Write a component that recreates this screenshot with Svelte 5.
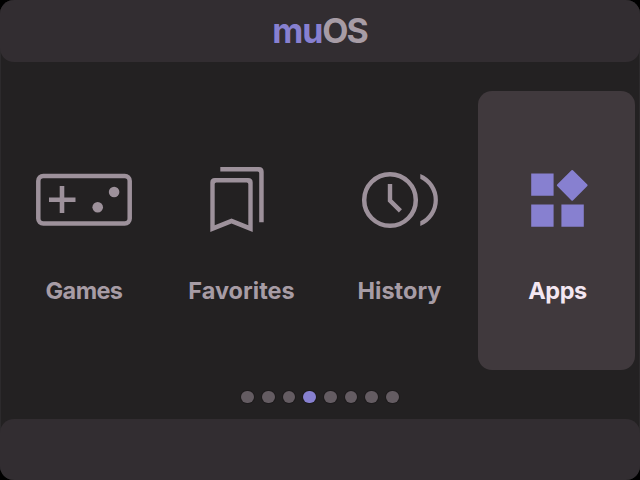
<script>
  const items = [
    { id: 'games', label: 'Games' },
    { id: 'favorites', label: 'Favorites' },
    { id: 'history', label: 'History' },
    { id: 'apps', label: 'Apps' }
  ];
  const selected = 'apps';
  const pages = [0, 1, 2, 3, 4, 5, 6, 7];
</script>

<div class="screen">
  <header><h1><span class="mu">mu</span><span class="os">OS</span></h1></header>
  <main>
    {#each items as item (item.id)}
      <div class="item {item.id}" class:selected={item.id === selected}>
        {#if item.id === 'games'}
          <svg viewBox="36 152 96 96">
            <rect x="38.3" y="176" width="91.4" height="47.5" rx="5" fill="none" stroke="currentColor" stroke-width="4.5" />
            <path d="M49 199.8H75.5M62 186V213" stroke="currentColor" stroke-width="4.6" />
            <circle cx="97.7" cy="207.3" r="5.3" /><circle cx="114.1" cy="192" r="5.3" />
          </svg>
        {:else if item.id === 'favorites'}
          <svg viewBox="194 152 96 96">
            <path fill-rule="evenodd" d="M210.3 232V182.5Q210.3 178 214.8 178H248.2Q252.7 178 252.7 182.5V232L231.5 223.4ZM214.7 225.3L231.5 218.4L248.3 225.3V184Q248.3 182.4 246.7 182.4H216.3Q214.7 182.4 214.7 184Z" />
            <path d="M220.3 167H259Q263.7 167 263.7 171.7V222.3H259.2V173Q259.2 171.4 257.6 171.4H220.3Z" />
          </svg>
        {:else if item.id === 'history'}
          <svg viewBox="352 152 96 96">
            <g fill="none" stroke="currentColor">
              <circle cx="390" cy="200" r="25.8" stroke-width="4.5" />
              <path d="M390 184V200.5L400.4 210.9" stroke-width="4.4" />
            </g>
            <path d="M420.3 174A28 28 0 0 1 420.3 226V221.2A23.5 23.5 0 0 0 420.3 178.8Z" />
          </svg>
        {:else}
          <svg viewBox="510 152 96 96">
            <path d="M531.2 173.4h22.4v22.4h-22.4zM531.2 204.4h22.4v22.4h-22.4zM561.4 204.4h22.4v22.4h-22.4z" />
            <path d="M572.2 171L586.6 185.3L572.2 199.7L557.9 185.3Z" stroke="currentColor" stroke-width="2" stroke-linejoin="round" />
          </svg>
        {/if}
        <span class="label">{item.label}</span>
      </div>
    {/each}
  </main>
  <nav>
    {#each pages as page}<i class:active={page === 3}></i>{/each}
  </nav>
  <footer></footer>
</div>

<style>
  :global(body) { background: #000; }
  .screen {
    width: 640px;
    height: 480px;
    box-sizing: border-box;
    display: flex;
    flex-direction: column;
    overflow: hidden;
    border-radius: 14px;
    background: #232122;
    box-shadow: inset 1px 0 #2c2a2c, inset -1px 0 #2c2a2c;
    font-family: "Inter", sans-serif;
  }
  header, footer { flex: none; background: #322d31; border-radius: 14px; }
  header { height: 62px; display: flex; justify-content: center; }
  footer { height: 61px; }
  h1 { margin: 0; padding-right: 1px; font-size: 34px; line-height: 61px; font-weight: 650; color: #a79ca5; }
  .mu { color: #8780d0; letter-spacing: -1px; }
  .os { letter-spacing: -2px; }
  main {
    height: 279px;
    margin: 29px 3px 0 5px;
    display: grid;
    grid-template-columns: repeat(4, 158px);
  }
  .item {
    display: flex;
    flex-direction: column;
    align-items: center;
    padding-top: 61px;
    box-sizing: border-box;
    color: #9d919b;
  }
  svg { width: 96px; height: 96px; flex: none; fill: currentColor; }
  .label { margin-top: 28px; font-size: 23.5px; line-height: 29px; font-weight: 650; color: #a79ca5; }
  .games .label { letter-spacing: -0.6px; }
  .favorites .label { padding-right: 1px; }
  .history .label { padding-right: 1px; }
  .apps .label { letter-spacing: -0.4px; }
  .selected {
    width: 157px;
    margin-left: -1.5px;
    padding-left: 3px;
    background: #40393d;
    border-radius: 14px;
    color: #8780d0;
  }
  .selected .label { color: #f3e6f1; }
  nav {
    flex: 1;
    display: flex;
    justify-content: center;
    align-items: center;
    gap: 8.1px;
    padding-top: 5px;
  }
  i { width: 12.6px; height: 12.6px; border-radius: 50%; background: #645c62; box-shadow: 0 0 0 1px #1d1b1c; }
  .active { background: #8780d0; }
</style>
